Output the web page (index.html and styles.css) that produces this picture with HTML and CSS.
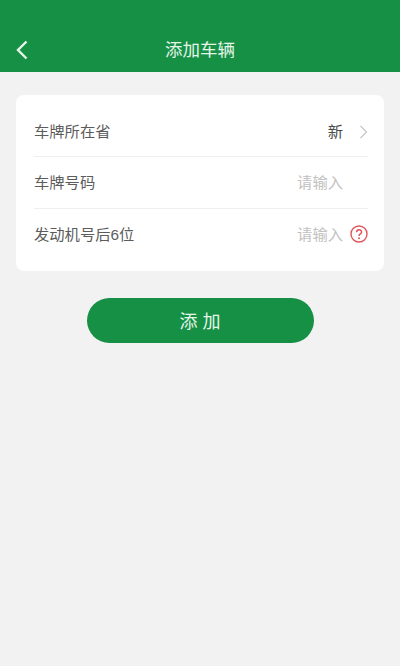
FILE: index.html
```html
<!DOCTYPE html>
<html lang="zh-CN">
<head>
<meta charset="UTF-8">
<title>添加车辆</title>
<link rel="stylesheet" href="styles.css">
</head>
<body>

<!-- Header -->
<header class="header">
    <a class="back">
        <svg width="14" height="20" viewBox="0 0 14 20"><path d="M11.5 1.5 L3 10 L11.5 18.5" fill="none" stroke="#e6f5ea" stroke-width="2.4"/></svg>
    </a>
    <h1>添加车辆</h1>
</header>

<!-- Form -->
<div class="card">
    <div class="row">
        <span class="label">车牌所在省</span>
        <span class="value">新</span>
        <svg class="side" width="18" height="18" viewBox="0 0 18 18"><path d="M10.5 4 L16.5 10 L10.5 16" fill="none" stroke="#c8c8c8" stroke-width="1.3"/></svg>
    </div>
    <div class="row">
        <span class="label">车牌号码</span>
        <span class="hint">请输入</span>
        <span class="side"></span>
    </div>
    <div class="row">
        <span class="label">发动机号后6位</span>
        <span class="hint">请输入</span>
        <svg class="side" width="18" height="18" viewBox="0 0 18 18">
            <circle cx="9" cy="9" r="8" fill="none" stroke="#e0575c" stroke-width="1.4"/>
            <path d="M6.6 7.2 C6.6 3.9 11.6 4 11.6 7 C11.6 8.9 9 9 9 11" fill="none" stroke="#e0575c" stroke-width="1.5"/>
            <circle cx="9" cy="13.3" r="1" fill="#e0575c"/>
        </svg>
    </div>
</div>

<button class="add">添 加</button>

</body>
</html>
```

FILE: styles.css
```css
body {
    margin: 0;
    min-height: 666px;
    background: #f2f2f2;
    font-family: "Liberation Sans", "Noto Sans CJK SC", sans-serif;
    color: #5c5c5c;
}

.header {
    position: relative;
    height: 72px;
    box-sizing: border-box;
    padding-top: 37px;
    background: #159045;
    text-align: center;
}

.header h1 {
    margin: 0;
    font-size: 17.5px;
    font-weight: normal;
    line-height: 26px;
    color: #e6f5ea;
}

.back {
    position: absolute;
    left: 15px;
    top: 40px;
    line-height: 0;
}

.card {
    margin: 23px 16px 0;
    padding: 10px 16px 12px 18px;
    background: #fff;
    border-radius: 8px;
}

.row {
    display: flex;
    align-items: center;
    height: 51px;
    border-bottom: 1px solid #eeeeee;
}

.row + .row {
    height: 50px;
    padding-bottom: 1px;
}

.row:last-child {
    height: 49px;
    border-bottom: none;
}

.label {
    flex: 1;
    margin-bottom: 2px;
    font-size: 15.3px;
}

.value {
    margin-bottom: 2px;
    font-size: 15.3px;
    color: #4a4a4a;
}

.hint {
    margin-bottom: 2px;
    font-size: 15.3px;
    color: #c2c2c2;
}

.side {
    width: 18px;
    height: 18px;
    margin-left: 7px;
    flex: none;
}

.add {
    display: block;
    width: 227px;
    height: 45px;
    margin: 27px auto 0;
    padding-bottom: 3px;
    border: none;
    border-radius: 23px;
    background: #159045;
    color: #e6f5ea;
    font-family: inherit;
    font-size: 18px;
}
```
